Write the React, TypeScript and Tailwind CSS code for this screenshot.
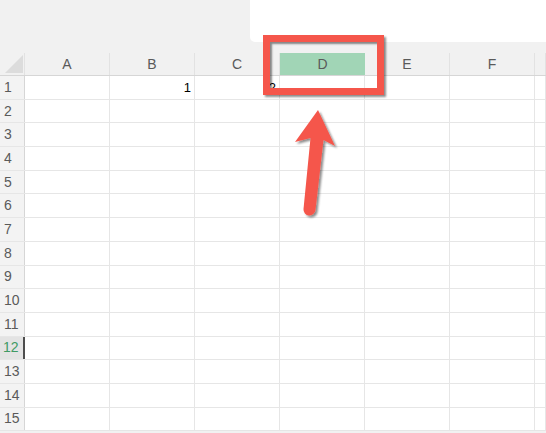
import * as React from "react"

const columns = ["A", "B", "C", "D", "E", "F", ""]
const rows = Array.from({ length: 15 }, (_, i) => i + 1)

const cellValues: Record<string, string> = {
  "1-B": "1",
  "1-C": "2",
}

export default function App() {
  return (
    <div
      className="relative h-[433px] w-[546px] overflow-hidden bg-[#f1f1f1] text-[13px] text-[#555]"
      style={{ fontFamily: '"Liberation Sans", Arial, sans-serif' }}
    >
      {/* ribbon area */}
      <div className="flex h-[42px]">
        <div className="w-[250px]" />
        <div className="flex-1 rounded-bl-[5px] bg-white" />
      </div>
      <div className="h-[11px]" />

      {/* column headers */}
      <div className="grid h-[23px] grid-cols-[25px_repeat(6,85px)_1fr] border-b border-[#d6d6d6]">
        <div className="relative border-r border-[#e2e2e2]">
          <svg className="absolute left-[5px] top-[2px]" width="18" height="18" viewBox="0 0 18 18">
            <polygon points="18,0 18,18 0,18" fill="#dcdcdc" />
          </svg>
        </div>
        {columns.map((c, i) => (
          <div
            key={`h-${i}`}
            className={
              c === "D"
                ? "flex items-center justify-center bg-[#a1d5b6] pt-[1px] text-[14px] text-[#5a5a5a]"
                : "flex items-center justify-center border-r border-[#e2e2e2] pt-[1px] text-[14px] text-[#5a5a5a]"
            }
          >
            {c}
          </div>
        ))}
      </div>

      {/* rows */}
      <div className="bg-white">
        {rows.map((r) => (
          <div key={r} className="grid h-[23.7px] grid-cols-[25px_repeat(6,85px)_1fr] border-b border-[#e6e6e6]">
            <div
              className={
                r === 12
                  ? "flex items-center border-r-2 border-[#4d4d4d] bg-[#e3e3e3] pl-[3px] text-[14px] text-[#3f9a63]"
                  : "flex items-center border-r border-[#d6d6d6] bg-[#f3f3f3] pl-[4px] text-[14px] text-[#5a5a5a]"
              }
            >
              {r}
            </div>
            {columns.map((c, i) => (
              <div
                key={`${r}-${i}`}
                className="flex items-center justify-end border-r border-[#e6e6e6] pr-[3px] text-[13px] text-black"
              >
                {cellValues[`${r}-${c}`] ?? ""}
              </div>
            ))}
          </div>
        ))}
      </div>

      {/* red highlight box */}
      <div className="absolute left-[263px] top-[35px] h-[60px] w-[121px] border-[7px] border-[#f5564b] shadow-[2px_2px_2px_rgba(0,0,0,0.45),inset_2px_2px_2px_rgba(0,0,0,0.45)]" />

      {/* arrow */}
      <svg className="absolute left-[285px] top-[100px]" width="70" height="125" viewBox="0 0 70 125">
        <defs>
          <filter id="sh" x="-30%" y="-30%" width="160%" height="160%">
            <feDropShadow dx="2" dy="2" stdDeviation="1.2" floodColor="#000" floodOpacity="0.45" />
          </filter>
        </defs>
        <path
          d="M33 10 L50 46 L38.5 40 L30.5 110 A6 6 0 0 1 18.5 109 L25.5 38 L10 42 Z"
          fill="#f5564b"
          filter="url(#sh)"
        />
      </svg>
    </div>
  )
}
